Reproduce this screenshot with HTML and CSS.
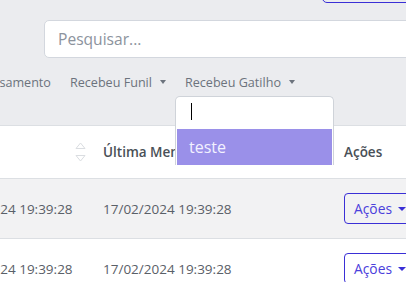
FILE: index.html
```html
<!DOCTYPE html>
<html lang="pt">
<head>
<meta charset="utf-8">
<link rel="stylesheet" href="styles.css">
</head>
<body>
<div class="page">
  <div class="topbar"><div class="top-btn"></div></div>
  <div class="search-row">
    <input class="search" type="text" placeholder="Pesquisar...">
  </div>
  <div class="filters">
    <div class="filter first">Processamento</div>
    <div class="filter">Recebeu Funil <span class="caret"></span></div>
    <div class="filter gatilho">Recebeu Gatilho <span class="caret"></span></div>
  </div>
  <div class="table">
    <div class="row head">
      <div class="cell c1"><svg class="sort" width="11" height="20" viewBox="0 0 11 20"><path d="M5.5 1 L10 6.5 L1 6.5 Z M1 13.5 L10 13.5 L5.5 19 Z" fill="none" stroke="#dadde1" stroke-width="1"/></svg></div>
      <div class="cell c2">Última Mensagem</div>
      <div class="cell c3">Ações</div>
    </div>
    <div class="row stripe">
      <div class="cell c1">17/02/2024 19:39:28</div>
      <div class="cell c2">17/02/2024 19:39:28</div>
      <div class="cell c3"><button class="act">Ações <span class="caret dark"></span></button></div>
    </div>
    <div class="row">
      <div class="cell c1">17/02/2024 19:39:28</div>
      <div class="cell c2">17/02/2024 19:39:28</div>
      <div class="cell c3"><button class="act">Ações <span class="caret dark"></span></button></div>
    </div>
  </div>
  <div class="dropdown">
    <div class="dd-search"><span class="text-caret"></span></div>
    <div class="dd-item">teste</div>
  </div>
</div>
</body>
</html>
```
FILE: styles.css
```css
html, body {
  margin: 0;
  padding: 0;
}
body {
  background: #ebecef;
  font-family: "Open Sans", "Noto Sans", sans-serif;
  width: 406px;
  height: 282px;
  overflow: hidden;
}
.page {
  position: relative;
  width: 406px;
  height: 282px;
  overflow: hidden;
}
.topbar {
  height: 20px;
  display: flex;
}
.top-btn {
  margin-left: 322px;
  margin-top: -27px;
  width: 120px;
  height: 30px;
  box-sizing: border-box;
  border: 1px solid #3a2fd6;
  border-radius: 5px;
  flex: none;
}
.search-row {
  display: flex;
  padding-left: 44px;
}
.search {
  flex: none;
  width: 420px;
  height: 38px;
  box-sizing: border-box;
  border: 1px solid #d3d7de;
  border-radius: 5px;
  background: #fff;
  padding: 0 13px;
  font-family: inherit;
  font-size: 15.6px;
  color: #495057;
  outline: none;
}
.search::placeholder {
  color: #8c939d;
}
.filters {
  display: flex;
  align-items: center;
  gap: 19px;
  height: 48px;
  margin-bottom: 19px;
  font-size: 12.6px;
  color: #6c737d;
  white-space: nowrap;
}
.filter {
  display: flex;
  align-items: center;
  gap: 8px;
  flex: none;
}
.filter.first {
  margin-left: -40px;
}
.caret {
  width: 0;
  height: 0;
  border-left: 3.5px solid transparent;
  border-right: 3.5px solid transparent;
  border-top: 4px solid #6c737d;
}
.caret.dark {
  border-left-width: 4px;
  border-right-width: 4px;
  border-top: 4.5px solid #3a2fd6;
}
.table {
  background: #fff;
  border-top: 1px solid #dcdfe3;
}
.row {
  display: grid;
  grid-template-columns: 159px 241px 110px;
  margin-left: -68px;
  height: 59px;
  align-items: center;
  border-bottom: 1px solid #dcdfe3;
  font-size: 13.5px;
  color: #5a6068;
  white-space: nowrap;
}
.row.head {
  height: 52px;
  font-weight: 600;
  color: #495057;
}
.row.stripe {
  background: #f2f2f3;
}
.cell {
  padding-left: 12px;
  overflow: hidden;
}
.head .c1 {
  display: flex;
  justify-content: flex-end;
  padding-right: 5px;
}
.sort {
  display: block;
}
.act {
  display: flex;
  align-items: center;
  gap: 6px;
  height: 31px;
  box-sizing: border-box;
  border: 1px solid #3a2fd6;
  border-radius: 4px;
  background: transparent;
  padding: 0 9px;
  font-family: inherit;
  font-size: 13.8px;
  color: #4b40dc;
  width: 80px;
}
.dropdown {
  position: absolute;
  left: 175px;
  top: 96px;
  width: 159px;
  box-sizing: border-box;
  background: #fff;
  border: 1px solid #cfd3d9;
  border-bottom: none;
  border-radius: 5px 5px 0 0;
  padding: 0 1px;
}
.dd-search {
  height: 32px;
  padding-left: 14px;
  display: flex;
  align-items: flex-start;
}
.text-caret {
  display: block;
  width: 1px;
  height: 17px;
  margin-top: 6px;
  background: #000;
}
.dd-item {
  height: 36px;
  background: #9a90e9;
  color: #f3f2ff;
  font-size: 16px;
  padding-left: 12px;
  display: flex;
  align-items: center;
}
```
